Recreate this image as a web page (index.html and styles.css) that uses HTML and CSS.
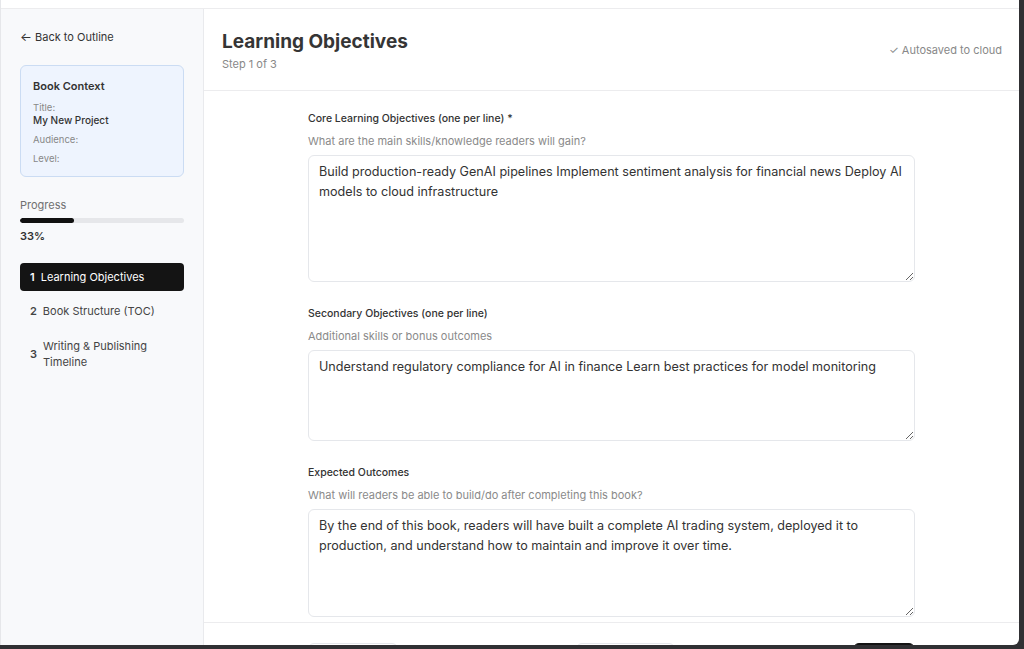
FILE: index.html
```html
<!DOCTYPE html>
<html lang="en">
<head>
<meta charset="utf-8">
<title>Learning Objectives</title>
<link rel="stylesheet" href="styles.css">
</head>
<body>
<div class="app">
  <div class="topstrip"></div>
  <div class="layout">
    <aside class="sidebar">
      <a class="back" href="#"><span class="arrow">←</span> Back to Outline</a>
      <div class="context">
        <h3>Book Context</h3>
        <div class="ctx-label">Title:</div>
        <div class="ctx-value">My New Project</div>
        <div class="ctx-label gap">Audience:</div>
        <div class="ctx-label gap">Level:</div>
      </div>
      <div class="progress">
        <div class="progress-label">Progress</div>
        <div class="track"><div class="fill" style="width:33%"></div></div>
        <div class="pct">33%</div>
      </div>
      <nav class="steps">
        <div class="step active"><span class="num">1</span><span>Learning Objectives</span></div>
        <div class="step"><span class="num">2</span><span>Book Structure (TOC)</span></div>
        <div class="step"><span class="num">3</span><span>Writing &amp; Publishing Timeline</span></div>
      </nav>
    </aside>
    <main class="main">
      <header class="header">
        <div>
          <h1>Learning Objectives</h1>
          <div class="stepof">Step 1 of 3</div>
        </div>
        <div class="saved">✓ Autosaved to cloud</div>
      </header>
      <section class="content">
        <div class="form">
          <div class="field">
            <label>Core Learning Objectives (one per line) *</label>
            <p class="help">What are the main skills/knowledge readers will gain?</p>
            <textarea class="ta ta1">Build production-ready GenAI pipelines Implement sentiment analysis for financial news Deploy AI models to cloud infrastructure</textarea>
          </div>
          <div class="field">
            <label>Secondary Objectives (one per line)</label>
            <p class="help">Additional skills or bonus outcomes</p>
            <textarea class="ta ta2">Understand regulatory compliance for AI in finance Learn best practices for model monitoring</textarea>
          </div>
          <div class="field">
            <label>Expected Outcomes</label>
            <p class="help">What will readers be able to build/do after completing this book?</p>
            <textarea class="ta ta3">By the end of this book, readers will have built a complete AI trading system, deployed it to production, and understand how to maintain and improve it over time.</textarea>
          </div>
        </div>
      </section>
      <footer class="footer">
        <div class="footer-inner">
          <button class="btn prev" aria-label="Previous"></button>
          <button class="btn mid" aria-label="Save draft"></button>
          <button class="btn dark" aria-label="Next"></button>
        </div>
      </footer>
    </main>
  </div>
</div>
</body>
</html>
```

FILE: styles.css
```css
* { box-sizing: border-box; }
html, body { margin: 0; padding: 0; }
body {
  background: #303033;
  width: 1024px;
  height: 649px;
  overflow: hidden;
  font-family: Inter, "Noto Sans", sans-serif;
  color: #333;
}
.app {
  width: 1019px;
  height: 645px;
  background: #fff;
  border-left: 1px solid #e6e7ea;
  border-bottom-right-radius: 6px;
  overflow: hidden;
  display: flex;
  flex-direction: column;
}
.topstrip {
  height: 9px;
  flex: none;
  background: #fff;
  border-bottom: 1px solid #ececee;
}
.layout {
  flex: 1;
  display: flex;
  min-height: 0;
}
.sidebar {
  width: 203px;
  flex: none;
  background: #f8f9fb;
  border-right: 1px solid #e9eaed;
  padding: 20px 19px 20px 19px;
  display: flex;
  flex-direction: column;
}
.back {
  font-size: 11px;
  line-height: 16px;
  color: #333;
  text-decoration: none;
}
.back .arrow {
  font-size: 12.5px;
  line-height: 16px;
}
.context {
  margin-top: 20px;
  background: #eef4fe;
  border: 1px solid #cbdcf3;
  border-radius: 6px;
  padding: 12px 12px 11px 12px;
}
.context h3 {
  margin: 0 0 8px;
  font-size: 11px;
  line-height: 16px;
  font-weight: 600;
  color: #333;
}
.ctx-label {
  font-size: 9.5px;
  line-height: 12px;
  color: #888;
}
.ctx-label.gap { margin-top: 7px; }
.ctx-value {
  font-size: 10px;
  line-height: 13px;
  font-weight: 500;
  color: #333;
}
.progress { margin-top: 19px; }
.progress-label {
  font-size: 11px;
  line-height: 16px;
  color: #707070;
  padding-top: 1px;
}
.track {
  margin-top: 5px;
  height: 5px;
  background: #e6e7ea;
  border-radius: 3px;
  overflow: hidden;
}
.fill {
  height: 100%;
  background: #111;
  border-radius: 3px;
}
.pct {
  margin-top: 5px;
  font-size: 11px;
  line-height: 16px;
  font-weight: 600;
  color: #333;
}
.steps {
  margin-top: 19px;
  display: flex;
  flex-direction: column;
  gap: 6px;
}
.step {
  display: flex;
  align-items: center;
  gap: 6px;
  padding: 6px 10px;
  border-radius: 4px;
  font-size: 11px;
  line-height: 16px;
  color: #444;
}
.step .num { font-weight: 600; }
.step.active {
  background: #141414;
  color: #fff;
}
.step:last-child { padding-top: 7px; padding-bottom: 5px; }
.main {
  flex: 1;
  display: flex;
  flex-direction: column;
  min-width: 0;
}
.header {
  flex: none;
  display: flex;
  align-items: center;
  justify-content: space-between;
  padding: 18px 17px 18px 18px;
  border-bottom: 1px solid #ececee;
}
.header h1 {
  margin: 0;
  font-size: 19px;
  line-height: 29px;
  font-weight: 700;
  color: #353535;
}
.stepof {
  font-size: 11px;
  line-height: 16px;
  color: #888;
}
.saved {
  font-size: 11px;
  line-height: 16px;
  color: #888;
}
.content {
  flex: 1;
  min-height: 0;
  overflow: hidden;
  padding-top: 20px;
}
.form {
  width: 607px;
  margin: 0 auto;
  display: flex;
  flex-direction: column;
  gap: 24px;
}
.field label {
  display: block;
  font-size: 10.5px;
  line-height: 16px;
  font-weight: 500;
  color: #333;
}
.help {
  margin: 6px 0 6px;
  font-size: 11px;
  line-height: 16px;
  color: #8a8a8a;
}
.ta {
  display: block;
  width: 100%;
  border: 1px solid #e5e7eb;
  border-radius: 6px;
  padding: 6px 10px;
  font-family: Inter, "Noto Sans", sans-serif;
  font-size: 12.6px;
  line-height: 20px;
  color: #333;
  background: #fff;
  outline: none;
}
.ta1 { height: 127px; }
.ta2 { height: 91px; }
.ta3 { height: 108px; }
.footer {
  flex: none;
  height: 23px;
  border-top: 1px solid #ececee;
  padding-top: 20px;
}
.footer-inner {
  width: 607px;
  margin: 0 auto;
  display: flex;
  justify-content: space-between;
}
.btn {
  height: 36px;
  border: 1px solid #e5e7eb;
  border-radius: 6px;
  background: #fff;
  padding: 0;
}
.btn.prev { width: 90px; }
.btn.mid { width: 99px; }
.btn.dark {
  width: 62px;
  background: #141414;
  border-color: #141414;
}
```
